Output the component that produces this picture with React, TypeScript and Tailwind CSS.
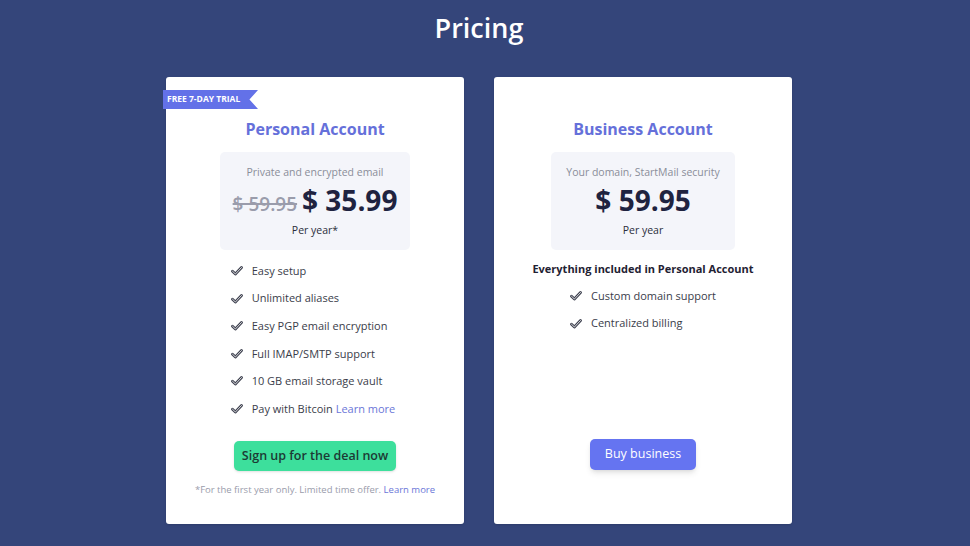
import React from 'react';

const font = { fontFamily: '"Open Sans", Lato, sans-serif' };

const CheckIcon: React.FC = () => (
  <svg width="12" height="10" viewBox="0 0 12 10" className="shrink-0">
    <path d="M1.5 5.2 L4.4 8 L10.5 1.5" fill="none" stroke="#3f4250" strokeWidth="2.8" strokeLinecap="round" strokeLinejoin="round" />
    <path d="M1.5 5.2 L4.4 8 L10.5 1.5" fill="none" stroke="#ffffff" strokeWidth="0.8" strokeLinecap="round" strokeLinejoin="round" />
  </svg>
);

const Feature: React.FC<{ children: React.ReactNode }> = ({ children }) => (
  <li className="flex items-center gap-[9px] h-4 text-[11px] text-[#3a3d4a]">
    <CheckIcon />
    <span>{children}</span>
  </li>
);

const personalFeatures = [
  'Easy setup',
  'Unlimited aliases',
  'Easy PGP email encryption',
  'Full IMAP/SMTP support',
  '10 GB email storage vault',
];

export default function App() {
  return (
    <div className="w-full min-h-[546px] bg-[#34457a] flex flex-col items-center pr-[12px]" style={font}>
      <h1 className="text-[27px] leading-[34px] font-semibold text-white mt-[11px] mb-[32px]">Pricing</h1>

      <div className="flex gap-[30px]">
        {/* Personal */}
        <div className="relative w-[298px] h-[447px] bg-white rounded-[3px] flex flex-col items-center pt-[41px] shadow-sm">
          <div className="absolute left-[-3px] top-[13px] h-[19px] w-[95px] bg-[#6371e8] text-white text-[8.5px] font-bold flex items-center pl-[4px] [clip-path:polygon(0_0,100%_0,91%_50%,100%_100%,0_100%)]">
            FREE 7-DAY TRIAL
          </div>
          <h2 className="text-[16px] leading-[22px] font-bold text-[#6570da]">Personal Account</h2>
          <div className="mt-[12px] w-[190px] h-[98px] bg-[#f4f5fa] rounded-[5px] flex flex-col items-center pt-[12px]">
            <p className="text-[10.5px] leading-4 text-[#8a8d99]">Private and encrypted email</p>
            <div className="mt-[4px] flex items-baseline gap-[5px] h-[32px]">
              <span className="text-[19px] font-semibold text-[#9a9cab] line-through decoration-[1.5px]">$ 59.95</span>
              <span className="text-[28px] leading-[32px] font-bold text-[#1f2340]">$ 35.99</span>
            </div>
            <p className="mt-[6px] text-[10.5px] leading-4 text-[#2a2d3a]">Per year*</p>
          </div>
          <ul className="mt-[13px] flex flex-col gap-[11.6px] pr-[4px]">
            {personalFeatures.map((f) => (
              <Feature key={f}>{f}</Feature>
            ))}
            <Feature>
              Pay with Bitcoin <span className="text-[#6b76d8]">Learn more</span>
            </Feature>
          </ul>
          <button className="mt-[24px] h-[30px] w-[162px] rounded-[5px] bg-[#3ddf9c] text-[12.5px] font-semibold text-[#1c3a34] shadow-sm">
            Sign up for the deal now
          </button>
          <p className="mt-[12px] text-[9.5px] text-[#9a9cab]">
            *For the first year only. Limited time offer. <span className="text-[#6b76d8]">Learn more</span>
          </p>
        </div>

        {/* Business */}
        <div className="w-[298px] h-[447px] bg-white rounded-[3px] flex flex-col items-center pt-[41px] pb-[54px] shadow-sm">
          <h2 className="text-[16px] leading-[22px] font-bold text-[#6570da]">Business Account</h2>
          <div className="mt-[12px] w-[184px] h-[98px] bg-[#f4f5fa] rounded-[5px] flex flex-col items-center pt-[12px]">
            <p className="text-[10.5px] leading-4 text-[#8a8d99]">Your domain, StartMail security</p>
            <div className="mt-[4px] h-[32px]">
              <span className="text-[28px] leading-[32px] font-bold text-[#1f2340]">$ 59.95</span>
            </div>
            <p className="mt-[6px] text-[10.5px] leading-4 text-[#2a2d3a]">Per year</p>
          </div>
          <p className="mt-[11px] text-[11px] leading-4 font-bold text-[#1f2233]">Everything included in Personal Account</p>
          <ul className="mt-[11px] flex flex-col gap-[11.6px]">
            <Feature>Custom domain support</Feature>
            <Feature>Centralized billing</Feature>
          </ul>
          <button className="mt-auto h-[31px] w-[106px] rounded-[5px] bg-[#6574f1] text-[12.5px] font-medium text-white shadow-md">
            Buy business
          </button>
        </div>
      </div>
    </div>
  );
}
